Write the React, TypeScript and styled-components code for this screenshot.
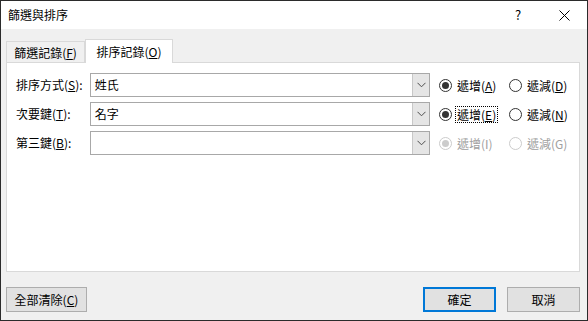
import React from "react"
import styled, { createGlobalStyle } from "styled-components"

const GlobalStyle = createGlobalStyle`
    html, body {
        margin: 0;
        padding: 0;
        background: #ffffff;
    }
    body {
        font-family: "Noto Sans CJK TC", "Liberation Sans", sans-serif;
        font-size: 12px;
        color: #000000;
    }
    * {
        box-sizing: border-box;
    }
`

const Window = styled.div`
    width: 588px;
    height: 321px;
    border: 1px solid #2b2b2b;
    background: #f0f0f0;
    display: flex;
    flex-direction: column;
`

const TitleBar = styled.div`
    height: 28px;
    background: #ffffff;
    display: flex;
    align-items: center;
    padding-left: 7px;
`

const Title = styled.div`
    flex: 1;
    line-height: 16px;
`

const TitleButton = styled.div`
    width: 46px;
    height: 28px;
    display: flex;
    align-items: center;
    justify-content: center;
    font-size: 13px;
    line-height: 16px;
`

const Body = styled.div`
    flex: 1;
    display: flex;
    flex-direction: column;
    padding: 9px 7px 9px 5px;
`

const TabStrip = styled.div`
    display: flex;
    align-items: flex-end;
    height: 24px;
`

const Tab = styled.div<{ $active?: boolean; $width: number }>`
    width: ${(p) => p.$width}px;
    height: ${(p) => (p.$active ? 24 : 21)}px;
    background: ${(p) => (p.$active ? "#ffffff" : "#f0f0f0")};
    border: 1px solid #d9d9d9;
    border-bottom: none;
    display: flex;
    align-items: center;
    justify-content: center;
    line-height: 16px;
    padding-top: ${(p) => (p.$active ? 0 : 1)}px;
    margin-bottom: ${(p) => (p.$active ? -1 : 0)}px;
    position: relative;
    z-index: ${(p) => (p.$active ? 1 : 0)};
`

const Panel = styled.div`
    height: 210px;
    background: #ffffff;
    border: 1px solid #d9d9d9;
    display: flex;
    flex-direction: column;
    gap: 5px;
    padding: 10px 0 0 9px;
`

const Row = styled.div`
    display: flex;
    align-items: center;
    height: 24px;
`

const Label = styled.div`
    width: 74px;
    line-height: 16px;
`

const Combo = styled.div`
    width: 341px;
    height: 24px;
    border: 1px solid #a8a8a8;
    background: #ffffff;
    display: flex;
`

const ComboText = styled.div`
    flex: 1;
    padding-left: 4px;
    display: flex;
    align-items: center;
    line-height: 16px;
`

const ComboButton = styled.div`
    width: 17px;
    background: #e5e5e5;
    border-left: 1px solid #c8c8c8;
    display: flex;
    align-items: center;
    justify-content: center;
`

const RadioGroup = styled.div`
    display: flex;
    margin-left: 9px;
`

const RadioItem = styled.div<{ $disabled?: boolean }>`
    display: flex;
    align-items: center;
    width: 70px;
    color: ${(p) => (p.$disabled ? "#a0a0a0" : "#000000")};
`

const Circle = styled.div<{ $checked?: boolean; $disabled?: boolean }>`
    width: 13px;
    height: 13px;
    border-radius: 50%;
    border: 1px solid ${(p) => (p.$disabled ? "#cccccc" : "#333333")};
    background: #ffffff;
    display: flex;
    align-items: center;
    justify-content: center;
    flex-shrink: 0;
    &::after {
        content: "";
        width: 7px;
        height: 7px;
        border-radius: 50%;
        background: ${(p) => (p.$disabled ? "#cccccc" : "#333333")};
        display: ${(p) => (p.$checked ? "block" : "none")};
    }
`

const RadioText = styled.span<{ $focused?: boolean }>`
    margin-left: 4px;
    line-height: 15px;
    padding: 0 1px;
    outline: ${(p) => (p.$focused ? "1px dotted #000000" : "none")};
`

const Footer = styled.div`
    display: flex;
    align-items: center;
    justify-content: space-between;
    margin-top: 15px;
`

const ButtonGroup = styled.div`
    display: flex;
    gap: 11px;
`

const Button = styled.button<{ $width: number; $default?: boolean }>`
    width: ${(p) => p.$width}px;
    height: 25px;
    font-family: inherit;
    font-size: 12px;
    color: #000000;
    background: #e1e1e1;
    border: ${(p) => (p.$default ? "2px solid #0078d7" : "1px solid #adadad")};
    padding: 0;
    line-height: 16px;
`

const Chevron = () => (
    <svg width="9" height="6" viewBox="0 0 9 6">
        <path d="M0.5 0.8 L4.5 4.8 L8.5 0.8" fill="none" stroke="#4d4d4d" strokeWidth="1" />
    </svg>
)

const CloseIcon = () => (
    <svg width="11" height="11" viewBox="0 0 11 11">
        <path d="M0.5 0.5 L10.5 10.5 M10.5 0.5 L0.5 10.5" stroke="#000000" strokeWidth="1" />
    </svg>
)

type SortRow = {
    label: string
    key: string
    value: string
    asc: string
    desc: string
    checked: boolean
    disabled?: boolean
    focused?: boolean
}

const rows: SortRow[] = [
    { label: "排序方式", key: "S", value: "姓氏", asc: "A", desc: "D", checked: true },
    { label: "次要鍵", key: "T", value: "名字", asc: "E", desc: "N", checked: true, focused: true },
    { label: "第三鍵", key: "B", value: "", asc: "I", desc: "G", checked: true, disabled: true },
]

export default function App() {
    return (
        <>
            <GlobalStyle />
            <Window>
                <TitleBar>
                    <Title>篩選與排序</Title>
                    <TitleButton>?</TitleButton>
                    <TitleButton><CloseIcon /></TitleButton>
                </TitleBar>
                <Body>
                    <TabStrip>
                        <Tab $width={79}>篩選記錄(<u>F</u>)</Tab>
                        <Tab $active $width={88}>排序記錄(<u>O</u>)</Tab>
                    </TabStrip>
                    <Panel>
                        {rows.map((r) => (
                            <Row key={r.key}>
                                <Label>{r.label}(<u>{r.key}</u>):</Label>
                                <Combo>
                                    <ComboText>{r.value}</ComboText>
                                    <ComboButton><Chevron /></ComboButton>
                                </Combo>
                                <RadioGroup>
                                    <RadioItem $disabled={r.disabled}>
                                        <Circle $checked={r.checked} $disabled={r.disabled} />
                                        <RadioText $focused={r.focused}>
                                            遞增({r.disabled ? r.asc : <u>{r.asc}</u>})
                                        </RadioText>
                                    </RadioItem>
                                    <RadioItem $disabled={r.disabled}>
                                        <Circle $disabled={r.disabled} />
                                        <RadioText>
                                            遞減({r.disabled ? r.desc : <u>{r.desc}</u>})
                                        </RadioText>
                                    </RadioItem>
                                </RadioGroup>
                            </Row>
                        ))}
                    </Panel>
                    <Footer>
                        <Button $width={81}>全部清除(<u>C</u>)</Button>
                        <ButtonGroup>
                            <Button $width={73} $default>確定</Button>
                            <Button $width={73}>取消</Button>
                        </ButtonGroup>
                    </Footer>
                </Body>
            </Window>
        </>
    )
}
